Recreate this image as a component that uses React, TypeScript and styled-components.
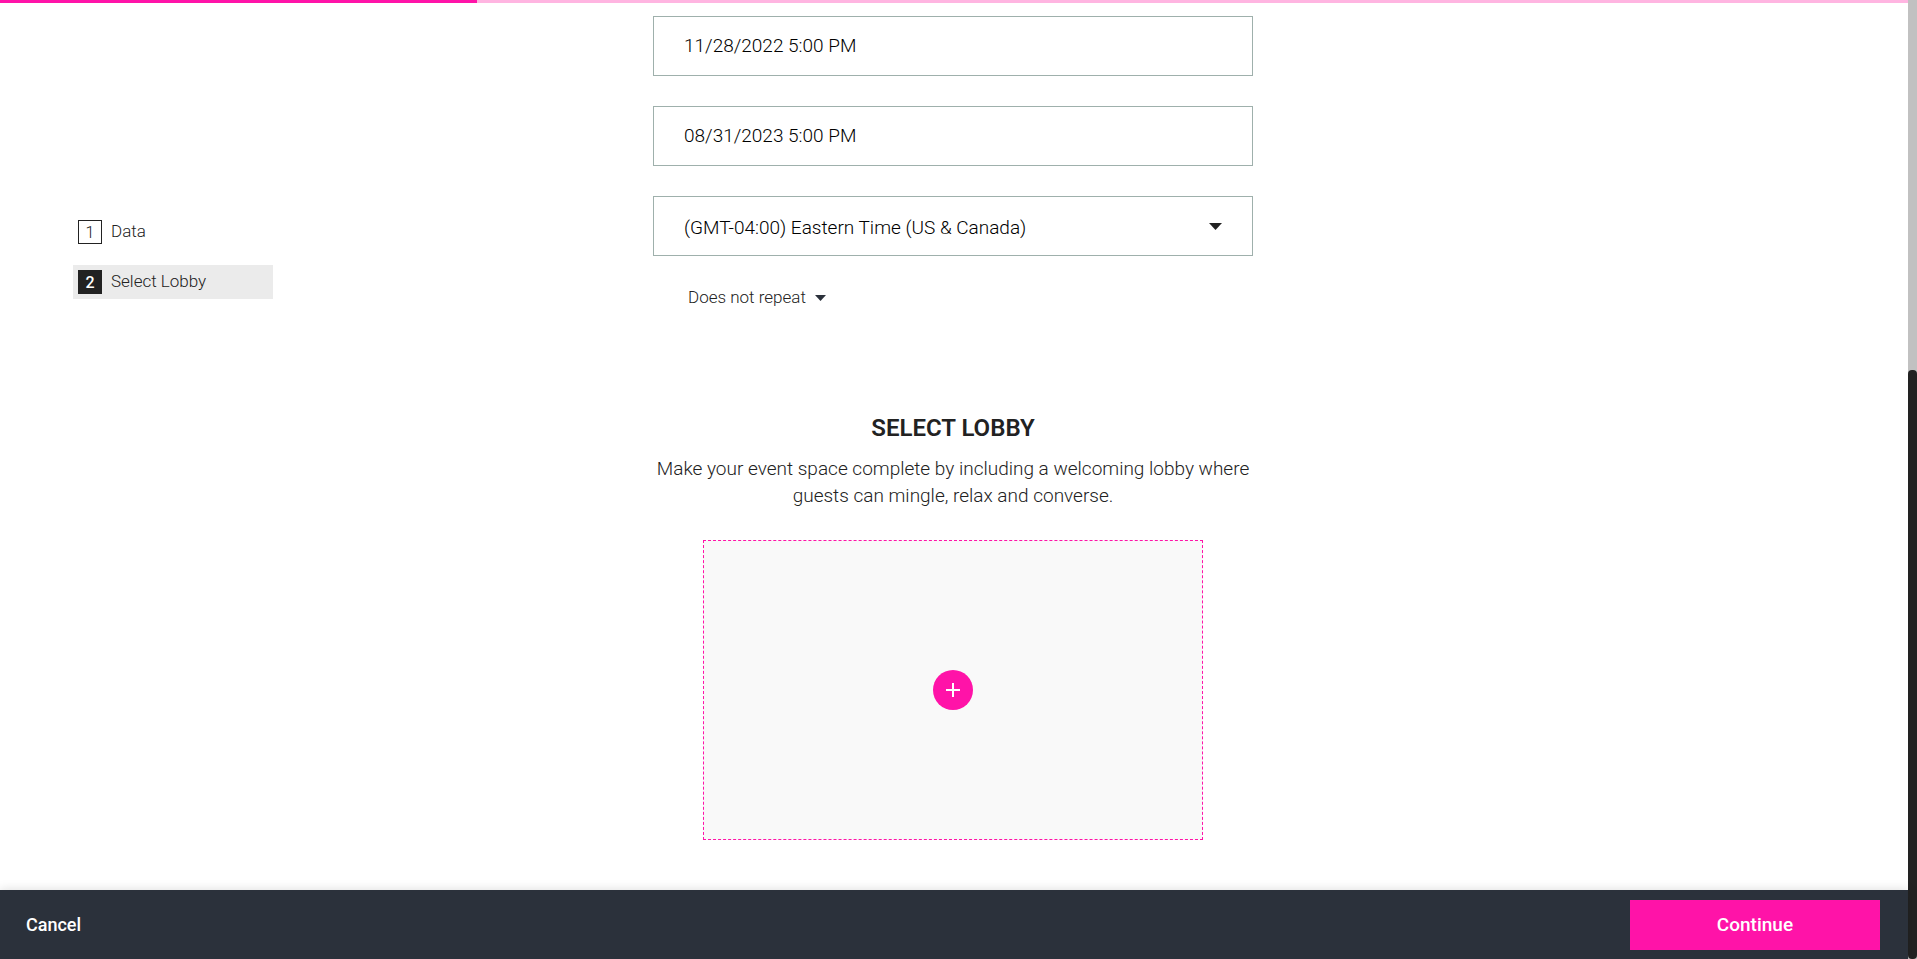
import React from "react";
import styled, { createGlobalStyle } from "styled-components";

const GlobalStyle = createGlobalStyle`
  *, *::before, *::after { box-sizing: border-box; }
  body {
    margin: 0;
    background: #fff;
    color: #222;
    font-family: Roboto, "Liberation Sans", sans-serif;
    font-size: 17px;
    font-weight: 300;
  }
  input, select, button { font: inherit; color: inherit; }
`;

const Page = styled.div`
  display: flex;
  height: 100vh;
  overflow: hidden;
`;

const Column = styled.div`
  flex: 1;
  min-width: 0;
  display: flex;
  flex-direction: column;
`;

const Progress = styled.div`
  flex: none;
  height: 3px;
  background: #ffb5e1;
`;

const ProgressValue = styled.div`
  height: 100%;
  background: #ff13a8;
`;

const Main = styled.main`
  flex: 1;
  min-height: 0;
  overflow: hidden;
  display: grid;
  grid-template-columns: 1fr minmax(0, 600px) 1fr;
  padding-right: 2px;
`;

const Steps = styled.ol`
  list-style: none;
  width: 200px;
  margin: 212px 0 0 73px;
  padding: 0;
  display: flex;
  flex-direction: column;
  gap: 16px;
`;

const Step = styled.li<{ $active?: boolean }>`
  height: 34px;
  background: ${(p) => (p.$active ? "#ebebeb" : "transparent")};
`;

const StepLink = styled.a`
  display: flex;
  align-items: center;
  gap: 9px;
  height: 100%;
  padding: 0 5px;
  color: inherit;
  text-decoration: none;
`;

const StepNumber = styled.span<{ $active?: boolean }>`
  display: flex;
  align-items: center;
  justify-content: center;
  width: 24px;
  height: 24px;
  border: 1px solid #222;
  background: ${(p) => (p.$active ? "#222" : "#fff")};
  color: ${(p) => (p.$active ? "#fff" : "#222")};
  font-size: 16px;
  font-weight: ${(p) => (p.$active ? 500 : 300)};
`;

const StepLabel = styled.span`
  padding-bottom: 2px;
`;

const Form = styled.form`
  padding-top: 13px;
`;

const Fields = styled.div`
  display: flex;
  flex-direction: column;
  gap: 30px;
  color: #000;
`;

const Input = styled.input`
  width: 100%;
  height: 60px;
  padding: 0 30px 2px;
  border: 1px solid #9fb0ac;
  border-radius: 0;
  background: #fff;
  font-size: 19px;
`;

const SelectBox = styled.div<{ $inline?: boolean }>`
  display: ${(p) => (p.$inline ? "inline-grid" : "grid")};
  align-items: center;
  margin: ${(p) => (p.$inline ? "30px 0 0 35px" : "0")};
  & > * { grid-area: 1 / 1; }
  & > svg { justify-self: end; margin-right: ${(p) => (p.$inline ? 0 : 31)}px; pointer-events: none; }
`;

const Select = styled.select<{ $inline?: boolean }>`
  appearance: none;
  width: 100%;
  height: ${(p) => (p.$inline ? 24 : 60)}px;
  padding: ${(p) => (p.$inline ? "0 20px 2px 0" : "2px 60px 0 30px")};
  border: ${(p) => (p.$inline ? "0" : "1px solid #9fb0ac")};
  border-radius: 0;
  background: transparent;
  font-size: ${(p) => (p.$inline ? 17 : 19)}px;
`;

const Lobby = styled.section`
  display: flex;
  flex-direction: column;
  align-items: center;
  margin-top: 100px;
`;

const Title = styled.h2`
  margin: 0;
  font-size: 24px;
  line-height: 36px;
  font-weight: 600;
`;

const Description = styled.p`
  margin: 9px 0 31px;
  font-size: 19px;
  line-height: 27px;
  text-align: center;
`;

const LobbyPicker = styled.button`
  display: flex;
  align-items: center;
  justify-content: center;
  width: 100%;
  max-width: 500px;
  height: 300px;
  padding: 0;
  border: 1px dashed #ff13a8;
  background: #f9f9f9;
  cursor: pointer;
`;

const PlusBadge = styled.span`
  display: flex;
  align-items: center;
  justify-content: center;
  width: 40px;
  height: 40px;
  border-radius: 50%;
  background: #ff13a8;
`;

const Footer = styled.footer`
  position: relative;
  flex: none;
  display: flex;
  align-items: center;
  justify-content: space-between;
  padding: 10px 28px 9px 26px;
  background: #2b313b;
  box-shadow: 0 0 10px rgba(0, 0, 0, 0.15);
`;

const FooterButton = styled.button<{ $primary?: boolean }>`
  height: 50px;
  width: ${(p) => (p.$primary ? "250px" : "auto")};
  padding: 0 0 2px;
  border: 0;
  background: ${(p) => (p.$primary ? "#ff13a8" : "transparent")};
  color: #fff;
  font-size: ${(p) => (p.$primary ? 19 : 18)}px;
  font-weight: 500;
  cursor: pointer;
`;

const ScrollTrack = styled.div`
  flex: none;
  display: flex;
  flex-direction: column;
  justify-content: flex-end;
  width: 9px;
  background: #c1c1c1;
`;

const ScrollThumb = styled.div`
  height: 61.4%;
  border-radius: 4px;
  background: #222;
`;

const Caret = ({ width, height, color }: { width: number; height: number; color: string }) => (
  <svg width={width} height={height} viewBox="0 0 12 6" preserveAspectRatio="none" aria-hidden="true">
    <path d="M0 0h12L6 6z" fill={color} />
  </svg>
);

const steps = ["Data", "Select Lobby"];
const activeStep = 1;
const progress = 25;

export default function App() {
  return (
    <>
      <GlobalStyle />
      <Page>
        <Column>
          <Progress role="progressbar" aria-valuenow={progress} aria-label="Progress">
            <ProgressValue style={{ width: `${progress}%` }} />
          </Progress>
          <Main>
            <nav aria-label="Steps">
              <Steps>
                {steps.map((label, i) => (
                  <Step key={label} $active={i === activeStep}>
                    <StepLink href="#">
                      <StepNumber $active={i === activeStep}>{i + 1}</StepNumber>
                      <StepLabel>{label}</StepLabel>
                    </StepLink>
                  </Step>
                ))}
              </Steps>
            </nav>
            <Form>
              <Fields>
                <Input aria-label="Start date" defaultValue="11/28/2022 5:00 PM" />
                <Input aria-label="End date" defaultValue="08/31/2023 5:00 PM" />
                <SelectBox>
                  <Select aria-label="Time zone">
                    <option>(GMT-04:00) Eastern Time (US &amp; Canada)</option>
                  </Select>
                  <Caret width={13} height={7} color="#222" />
                </SelectBox>
              </Fields>
              <SelectBox $inline>
                <Select $inline aria-label="Repeat">
                  <option>Does not repeat</option>
                </Select>
                <Caret width={11} height={6} color="#2b313b" />
              </SelectBox>
              <Lobby>
                <Title>SELECT LOBBY</Title>
                <Description>
                  Make your event space complete by including a welcoming lobby where guests can mingle, relax and
                  converse.
                </Description>
                <LobbyPicker type="button" aria-label="Add lobby">
                  <PlusBadge>
                    <svg width="14" height="14" viewBox="0 0 14 14" aria-hidden="true">
                      <path d="M7 0v14M0 7h14" stroke="#fff" strokeWidth="2" />
                    </svg>
                  </PlusBadge>
                </LobbyPicker>
              </Lobby>
            </Form>
          </Main>
          <Footer>
            <FooterButton type="button">Cancel</FooterButton>
            <FooterButton type="button" $primary>
              Continue
            </FooterButton>
          </Footer>
        </Column>
        <ScrollTrack>
          <ScrollThumb />
        </ScrollTrack>
      </Page>
    </>
  );
}
